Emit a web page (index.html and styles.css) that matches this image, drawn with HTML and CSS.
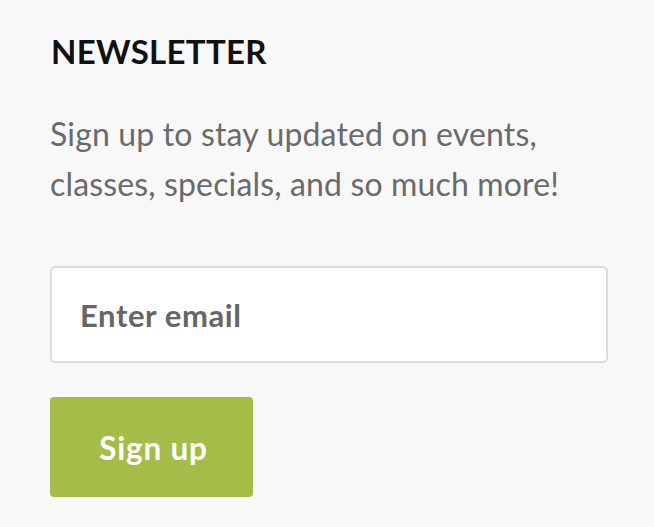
FILE: index.html
```html
<!DOCTYPE html>
<html lang="en">
<head>
<meta charset="utf-8">
<title>Newsletter</title>
<link rel="stylesheet" href="styles.css">
</head>
<body>
<section class="newsletter">
  <h2 class="title">NEWSLETTER</h2>
  <p class="desc">Sign up to stay updated on events,<br>classes, specials, and so much more!</p>
  <form class="form">
    <input class="email" type="email" placeholder="Enter email">
    <button class="btn" type="button">Sign up</button>
  </form>
</section>
</body>
</html>
```

FILE: styles.css
```css
html, body {
  margin: 0;
  padding: 0;
  background: #f8f8f8;
}
body {
  font-family: Lato, "Noto Sans", sans-serif;
}
.newsletter {
  padding: 35px 46px 0 50px;
}
.title {
  margin: 0 0 0 1px;
  font-size: 33px;
  line-height: 33px;
  font-weight: 700;
  color: #111;
  letter-spacing: 0.3px;
}
.desc {
  margin: 41px 0 0 0;
  font-size: 32px;
  line-height: 50px;
  color: #6a6a6a;
  font-weight: 400;
  letter-spacing: 0.15px;
}
.form {
  margin-top: 57px;
  display: flex;
  flex-direction: column;
  align-items: flex-start;
  gap: 34px;
}
.email {
  box-sizing: border-box;
  width: 558px;
  height: 97px;
  margin: 0;
  padding: 0 28px;
  border: 2px solid #dcdcdc;
  border-radius: 5px;
  background: #fff;
  font-family: Lato, "Noto Sans", sans-serif;
  font-size: 31px;
  font-weight: 700;
  letter-spacing: 0.6px;
  color: #666;
  outline: none;
}
.email::placeholder {
  color: #666;
  opacity: 1;
}
.btn {
  box-sizing: border-box;
  width: 203px;
  height: 100px;
  margin: 0;
  padding: 2px 0 0 4px;
  border: none;
  border-radius: 4px;
  background: #a3bd48;
  color: #fff;
  font-family: Lato, "Noto Sans", sans-serif;
  font-size: 31.5px;
  font-weight: 700;
  letter-spacing: 0.8px;
}
```
